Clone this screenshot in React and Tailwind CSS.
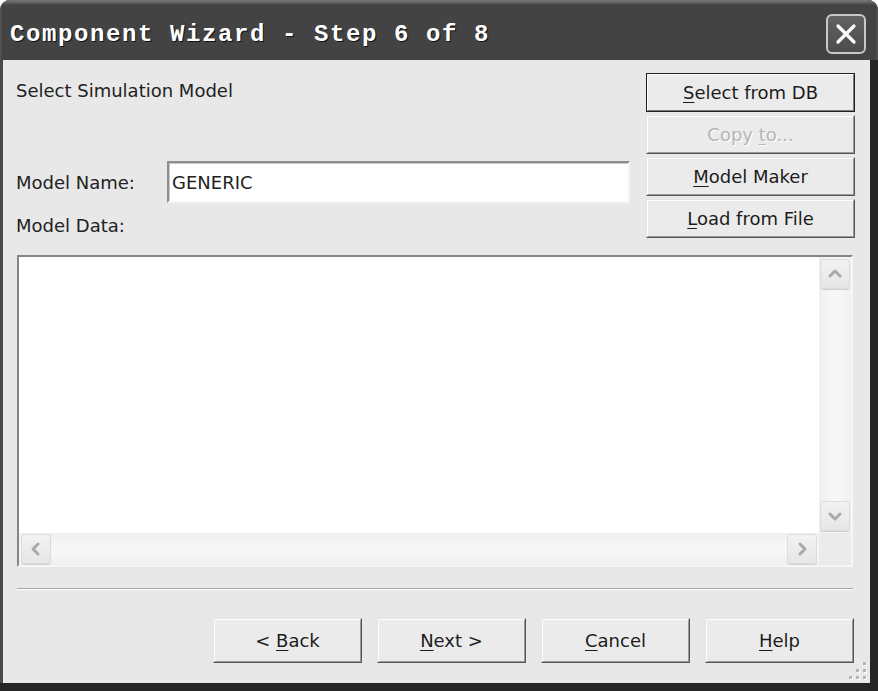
import React from 'react';

const ui = "font-['DejaVu_Sans',sans-serif]";

const Mn = ({ children }) => <span className="underline underline-offset-[3px] decoration-1">{children}</span>;

const WinButton = ({ children, isDefault, disabled, className = '' }) => (
    <div
        className={`flex items-center justify-center bg-[#ebebeb] border ${
            isDefault ? 'border-[#1e1e1e]' : 'border-t-[#e4e4e4] border-l-[#e4e4e4] border-b-[#555] border-r-[#555]'
        } ${className}`}
    >
        <div
            className={`w-full h-full flex items-center justify-center text-[18px] ${ui} ${
                disabled ? 'text-[#b4b4b4] [text-shadow:1px_1px_0_#ffffff]' : 'text-[#1c1c1c]'
            } ${
                isDefault
                    ? 'border border-t-white border-l-white border-b-[#7a7a7a] border-r-[#7a7a7a]'
                    : 'border border-t-white border-l-white border-b-[#9a9a9a] border-r-[#9a9a9a]'
            }`}
        >
            {children}
        </div>
    </div>
);

const Chevron = ({ dir }) => {
    const d = {
        up: 'M4 11 L9 6 L14 11',
        down: 'M4 7 L9 12 L14 7',
        left: 'M11 4 L6 9 L11 14',
        right: 'M7 4 L12 9 L7 14',
    }[dir];
    return (
        <svg width="18" height="18" viewBox="0 0 18 18">
            <path d={d} fill="none" stroke="#a9a9a9" strokeWidth="3" strokeLinecap="round" strokeLinejoin="round" />
        </svg>
    );
};

const ScrollBtn = ({ dir }) => (
    <div className="w-[30px] h-[30px] rounded-[3px] border border-[#dcdcdc] bg-gradient-to-b from-[#f2f2f2] to-[#e6e6e6] flex items-center justify-center shadow-[0_1px_0_#cfcfcf]">
        <Chevron dir={dir} />
    </div>
);

export default function App() {
    return (
        <div className="w-[878px] h-[691px] bg-[#262626] flex flex-col rounded-t-[10px] overflow-hidden">
            {/* title bar */}
            <div className="h-[60px] shrink-0 flex items-center justify-between pl-[10px] pr-[12px] bg-[#434343] shadow-[inset_0_3px_3px_#747474]">
                <span className="font-['Liberation_Mono',monospace] font-bold text-[24px] tracking-[1.6px] text-white [text-shadow:1px_1px_0_#111] pt-[10px]">
                    Component Wizard - Step 6 of 8
                </span>
                <div className="mt-[8px] w-[40px] h-[40px] rounded-[6px] border-2 border-[#c8c8c8] bg-gradient-to-b from-[#626262] to-[#4c4c4c] flex items-center justify-center">
                    <svg width="26" height="26" viewBox="0 0 26 26">
                        <path d="M5 5 L21 21 M21 5 L5 21" stroke="#ffffff" strokeWidth="3.2" strokeLinecap="round" />
                    </svg>
                </div>
            </div>

            <div className="flex flex-1">
                <div className="w-[3px] bg-[#4a4a4a]" />
                {/* dialog body */}
                <div className={`relative w-[867px] h-[623px] bg-[#e8e8e8] ${ui} text-[18px] text-[#222]`}>
                    <div className="flex pl-[13px] pr-[15px] pt-[13px] gap-[16px]">
                        <div className="flex-1 flex flex-col">
                            <div className="h-[24px] mt-[6px] leading-[24px]">Select Simulation Model</div>
                            <div className="h-[42px] mt-[58px] flex items-center">
                                <span className="w-[151px]">Model Name:</span>
                                <div className="w-[463px] h-[42px] bg-white border-2 border-t-[#8e8e8e] border-l-[#8e8e8e] border-b-[#f4f4f4] border-r-[#f4f4f4] flex items-center pl-[3px] shadow-[inset_1px_1px_0_#c8c8c8]">
                                    GENERIC
                                </div>
                            </div>
                            <div className="h-[24px] mt-[11px] leading-[24px]">Model Data:</div>
                        </div>
                        <div className="w-[209px] flex flex-col gap-[3px]">
                            <WinButton isDefault className="h-[39px]">
                                <span><Mn>S</Mn>elect from DB</span>
                            </WinButton>
                            <WinButton disabled className="h-[39px]">
                                <span>Copy <Mn>t</Mn>o...</span>
                            </WinButton>
                            <WinButton className="h-[39px]">
                                <span><Mn>M</Mn>odel Maker</span>
                            </WinButton>
                            <WinButton className="h-[39px]">
                                <span><Mn>L</Mn>oad from File</span>
                            </WinButton>
                        </div>
                    </div>

                    {/* model data box */}
                    <div className="ml-[14px] mt-[17px] w-[836px] h-[312px] border-2 border-t-[#858585] border-l-[#858585] border-b-[#f6f6f6] border-r-[#f6f6f6] bg-white flex flex-col">
                        <div className="flex flex-1">
                            <div className="flex-1 bg-white" />
                            <div className="w-[32px] flex flex-col justify-between items-center bg-gradient-to-r from-[#f0f0f0] via-[#f8f8f8] to-[#f0f0f0] py-[2px]">
                                <ScrollBtn dir="up" />
                                <ScrollBtn dir="down" />
                            </div>
                        </div>
                        <div className="h-[32px] flex">
                            <div className="flex-1 flex justify-between items-center bg-gradient-to-b from-[#f0f0f0] via-[#f8f8f8] to-[#f0f0f0] px-[2px]">
                                <ScrollBtn dir="left" />
                                <ScrollBtn dir="right" />
                            </div>
                            <div className="w-[32px] bg-[#ebebeb]" />
                        </div>
                    </div>

                    {/* separator */}
                    <div className="ml-[14px] mt-[21px] w-[836px] h-[2px] border-t border-t-[#a6a6a6] border-b border-b-white" />

                    {/* bottom buttons */}
                    <div className="flex justify-end gap-[15px] pr-[16px] mt-[28px]">
                        <WinButton className="w-[149px] h-[45px]">
                            <span>&lt; <Mn>B</Mn>ack</span>
                        </WinButton>
                        <WinButton className="w-[149px] h-[45px]">
                            <span><Mn>N</Mn>ext &gt;</span>
                        </WinButton>
                        <WinButton className="w-[149px] h-[45px]">
                            <span><Mn>C</Mn>ancel</span>
                        </WinButton>
                        <WinButton className="w-[149px] h-[45px]">
                            <span><Mn>H</Mn>elp</span>
                        </WinButton>
                    </div>

                    {/* resize grip */}
                    <div className="absolute right-[2px] bottom-[3px] w-[18px] h-[18px]">
                        {[
                            [13, 0],
                            [13, 7],
                            [6, 7],
                            [13, 14],
                            [6, 14],
                            [-1, 14],
                        ].map(([x, y], i) => (
                            <span
                                key={i}
                                className="absolute w-[3px] h-[3px] bg-[#b4b4b4] shadow-[1px_1px_0_#ffffff]"
                                style={{ left: x, top: y }}
                            />
                        ))}
                    </div>
                </div>
                <div className="w-[8px] bg-[#262626]" />
            </div>
            <div className="h-[8px] shrink-0 bg-[#262626]" />
        </div>
    );
}
